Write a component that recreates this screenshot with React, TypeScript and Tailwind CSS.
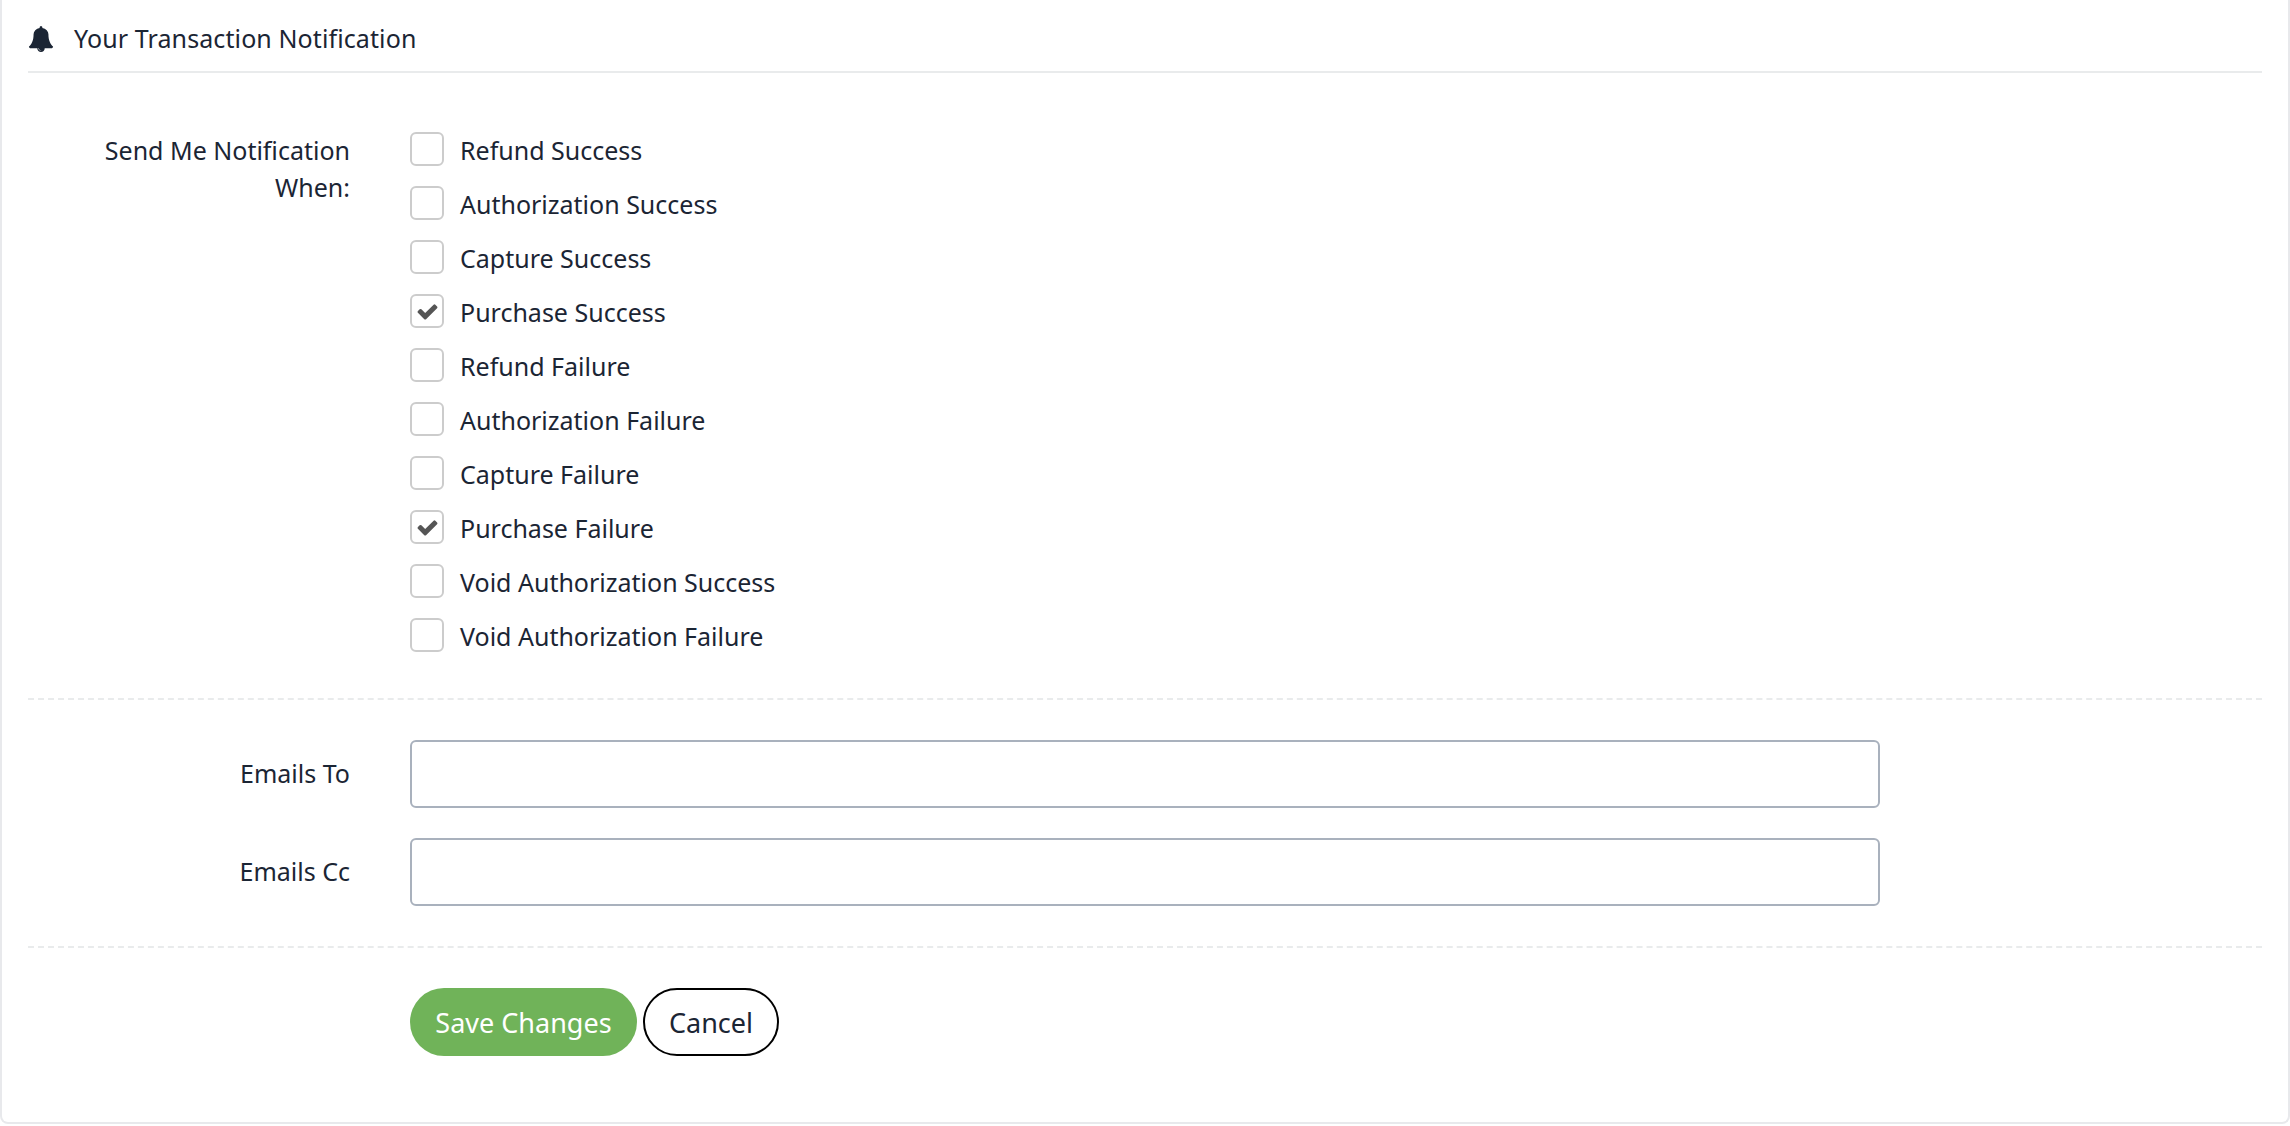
const options = [
  { label: 'Refund Success', checked: false },
  { label: 'Authorization Success', checked: false },
  { label: 'Capture Success', checked: false },
  { label: 'Purchase Success', checked: true },
  { label: 'Refund Failure', checked: false },
  { label: 'Authorization Failure', checked: false },
  { label: 'Capture Failure', checked: false },
  { label: 'Purchase Failure', checked: true },
  { label: 'Void Authorization Success', checked: false },
  { label: 'Void Authorization Failure', checked: false },
];

function BellIcon() {
  return (
    <svg viewBox="0 0 1792 1792" className="size-[26px] fill-current">
      <path d="M912 1696q0-16-16-16-59 0-101.5-42.5t-42.5-101.5q0-16-16-16t-16 16q0 73 51.5 124.5t124.5 51.5q16 0 16-16zm816-288q0 52-38 90t-90 38h-448q0 106-75 181t-181 75-181-75-75-181h-448q-52 0-90-38t-38-90q50-42 91-88t85-119.5 74.5-158.5 50-206 19.5-260q0-152 117-282.5t307-158.5q-8-19-8-39 0-40 28-68t68-28 68 28 28 68q0 20-8 39 190 28 307 158.5t117 282.5q0 139 19.5 260t50 206 74.5 158.5 85 119.5 91 88z" />
    </svg>
  );
}

function CheckIcon() {
  return (
    <svg viewBox="0 0 1792 1792" className="size-[23px] fill-current">
      <path d="M1671 566q0 40-28 68l-724 724-136 136q-28 28-68 28t-68-28l-136-136-362-362q-28-28-28-68t28-68l136-136q28-28 68-28t68 28l294 295 656-657q28-28 68-28t68 28l136 136q28 28 28 68z" />
    </svg>
  );
}

function EmailField({ label }: { label: string }) {
  return (
    <div className="flex items-center">
      <label className="w-[322px] pb-[2px] text-right">{label}</label>
      <input
        type="text"
        className="ml-[60px] h-[68px] w-[1470px] rounded-md border-2 border-[#a9b1bd] bg-white"
      />
    </div>
  );
}

export default function App() {
  return (
    <div className="h-[1126px] bg-white font-['Noto_Sans',sans-serif] text-[25px] leading-[37px] text-[#1b2534]">
      <div className="h-[1124px] rounded-b-lg border-x-2 border-b-2 border-[#e8e9ec] px-[26px]">
        {/* Header */}
        <div className="flex h-[73px] items-center gap-[20px] border-b-2 border-[#e9ebec] pt-[6px]">
          <BellIcon />
          <h2 className="font-normal tracking-[0.1px]">Your Transaction Notification</h2>
        </div>

        {/* Notification options */}
        <div className="flex border-b-2 border-dashed border-[#e9ebec] pb-[43px] pt-[59px]">
          <div className="w-[322px] text-right">Send Me Notification When:</div>
          <div className="ml-[60px] flex flex-col gap-[17px]">
            {options.map((option) => (
              <div key={option.label} className="flex h-[37px] gap-[16px]">
                <span className="flex size-[34px] items-center justify-center rounded-md border-2 border-[#cccccc] bg-white text-[#555555]">
                  {option.checked && <CheckIcon />}
                </span>
                <span>{option.label}</span>
              </div>
            ))}
          </div>
        </div>

        {/* Emails */}
        <div className="flex flex-col gap-[30px] border-b-2 border-dashed border-[#e9ebec] pb-[40px] pt-[40px]">
          <EmailField label="Emails To" />
          <EmailField label="Emails Cc" />
        </div>

        {/* Actions */}
        <div className="ml-[382px] flex gap-[6px] pt-[40px] text-[27px]">
          <button className="h-[68px] w-[227px] rounded-full bg-[#70b359] text-white">Save Changes</button>
          <button className="h-[68px] w-[136px] rounded-full border-2 border-black bg-white">Cancel</button>
        </div>
      </div>
    </div>
  );
}
